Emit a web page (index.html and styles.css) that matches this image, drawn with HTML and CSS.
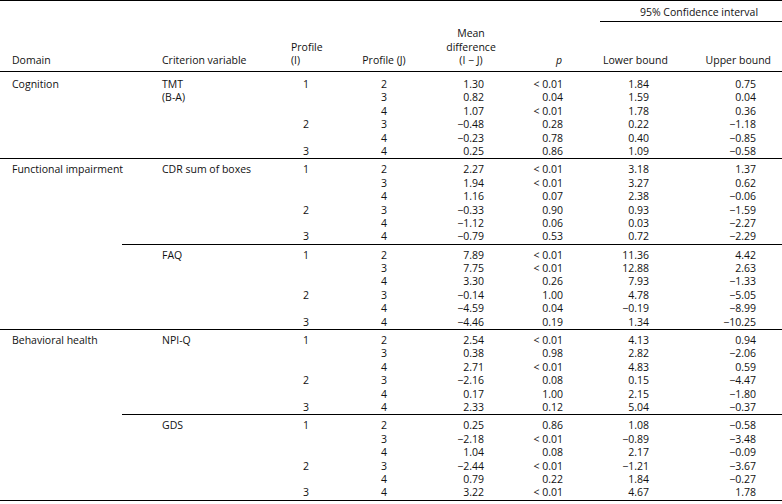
FILE: index.html
```html
<!DOCTYPE html>
<html lang="en">
<head>
<meta charset="utf-8">
<title>Pairwise comparisons</title>
<link rel="stylesheet" href="styles.css">
</head>
<body>
<table class="tbl">
  <colgroup>
    <col class="w-dom"><col class="w-crit"><col class="w-pi"><col class="w-pj"><col class="w-md"><col class="w-p"><col class="w-lo"><col class="w-up">
  </colgroup>
  <thead>
    <tr class="h-top">
      <td colspan="6"></td>
      <td colspan="2" class="ci"><div class="ci-label">95% Confidence interval</div></td>
    </tr>
    <tr class="h-main">
      <th class="dom">Domain</th>
      <th class="crit">Criterion variable</th>
      <th class="pi">Profile<br>(I)</th>
      <th class="pj">Profile (J)</th>
      <th class="md-h">Mean<br>difference<br>(I − J)</th>
      <th class="p-h"><i>p</i></th>
      <th class="lo-h">Lower bound</th>
      <th class="up-h">Upper bound</th>
    </tr>
  </thead>
  <tbody class="g-first">
    <tr class="first">
      <td class="dom" rowspan="6">Cognition</td>
      <td class="crit" rowspan="6">TMT<br>(B-A)</td>
      <td class="pi">1</td><td class="pj">2</td><td class="md">1.30</td><td class="p">&lt; 0.01</td><td class="lo">1.84</td><td class="up">0.75</td>
    </tr>
    <tr><td class="pi"></td><td class="pj">3</td><td class="md">0.82</td><td class="p">0.04</td><td class="lo">1.59</td><td class="up">0.04</td></tr>
    <tr><td class="pi"></td><td class="pj">4</td><td class="md">1.07</td><td class="p">&lt; 0.01</td><td class="lo">1.78</td><td class="up">0.36</td></tr>
    <tr><td class="pi">2</td><td class="pj">3</td><td class="md">−0.48</td><td class="p">0.28</td><td class="lo">0.22</td><td class="up">−1.18</td></tr>
    <tr><td class="pi"></td><td class="pj">4</td><td class="md">−0.23</td><td class="p">0.78</td><td class="lo">0.40</td><td class="up">−0.85</td></tr>
    <tr><td class="pi">3</td><td class="pj">4</td><td class="md">0.25</td><td class="p">0.86</td><td class="lo">1.09</td><td class="up">−0.58</td></tr>
  </tbody>
  <tbody>
    <tr class="first">
      <td class="dom" rowspan="12">Functional impairment</td>
      <td class="crit" rowspan="6">CDR sum of boxes</td>
      <td class="pi">1</td><td class="pj">2</td><td class="md">2.27</td><td class="p">&lt; 0.01</td><td class="lo">3.18</td><td class="up">1.37</td>
    </tr>
    <tr><td class="pi"></td><td class="pj">3</td><td class="md">1.94</td><td class="p">&lt; 0.01</td><td class="lo">3.27</td><td class="up">0.62</td></tr>
    <tr><td class="pi"></td><td class="pj">4</td><td class="md">1.16</td><td class="p">0.07</td><td class="lo">2.38</td><td class="up">−0.06</td></tr>
    <tr><td class="pi">2</td><td class="pj">3</td><td class="md">−0.33</td><td class="p">0.90</td><td class="lo">0.93</td><td class="up">−1.59</td></tr>
    <tr><td class="pi"></td><td class="pj">4</td><td class="md">−1.12</td><td class="p">0.06</td><td class="lo">0.03</td><td class="up">−2.27</td></tr>
    <tr><td class="pi">3</td><td class="pj">4</td><td class="md">−0.79</td><td class="p">0.53</td><td class="lo">0.72</td><td class="up">−2.29</td></tr>
    <tr class="first sub">
      <td class="crit" rowspan="6">FAQ</td>
      <td class="pi">1</td><td class="pj">2</td><td class="md">7.89</td><td class="p">&lt; 0.01</td><td class="lo">11.36</td><td class="up">4.42</td>
    </tr>
    <tr><td class="pi"></td><td class="pj">3</td><td class="md">7.75</td><td class="p">&lt; 0.01</td><td class="lo">12.88</td><td class="up">2.63</td></tr>
    <tr><td class="pi"></td><td class="pj">4</td><td class="md">3.30</td><td class="p">0.26</td><td class="lo">7.93</td><td class="up">−1.33</td></tr>
    <tr><td class="pi">2</td><td class="pj">3</td><td class="md">−0.14</td><td class="p">1.00</td><td class="lo">4.78</td><td class="up">−5.05</td></tr>
    <tr><td class="pi"></td><td class="pj">4</td><td class="md">−4.59</td><td class="p">0.04</td><td class="lo">−0.19</td><td class="up">−8.99</td></tr>
    <tr><td class="pi">3</td><td class="pj">4</td><td class="md">−4.46</td><td class="p">0.19</td><td class="lo">1.34</td><td class="up">−10.25</td></tr>
  </tbody>
  <tbody>
    <tr class="first">
      <td class="dom" rowspan="12">Behavioral health</td>
      <td class="crit" rowspan="6">NPI-Q</td>
      <td class="pi">1</td><td class="pj">2</td><td class="md">2.54</td><td class="p">&lt; 0.01</td><td class="lo">4.13</td><td class="up">0.94</td>
    </tr>
    <tr><td class="pi"></td><td class="pj">3</td><td class="md">0.38</td><td class="p">0.98</td><td class="lo">2.82</td><td class="up">−2.06</td></tr>
    <tr><td class="pi"></td><td class="pj">4</td><td class="md">2.71</td><td class="p">&lt; 0.01</td><td class="lo">4.83</td><td class="up">0.59</td></tr>
    <tr><td class="pi">2</td><td class="pj">3</td><td class="md">−2.16</td><td class="p">0.08</td><td class="lo">0.15</td><td class="up">−4.47</td></tr>
    <tr><td class="pi"></td><td class="pj">4</td><td class="md">0.17</td><td class="p">1.00</td><td class="lo">2.15</td><td class="up">−1.80</td></tr>
    <tr><td class="pi">3</td><td class="pj">4</td><td class="md">2.33</td><td class="p">0.12</td><td class="lo">5.04</td><td class="up">−0.37</td></tr>
    <tr class="first sub">
      <td class="crit" rowspan="6">GDS</td>
      <td class="pi">1</td><td class="pj">2</td><td class="md">0.25</td><td class="p">0.86</td><td class="lo">1.08</td><td class="up">−0.58</td>
    </tr>
    <tr><td class="pi"></td><td class="pj">3</td><td class="md">−2.18</td><td class="p">&lt; 0.01</td><td class="lo">−0.89</td><td class="up">−3.48</td></tr>
    <tr><td class="pi"></td><td class="pj">4</td><td class="md">1.04</td><td class="p">0.08</td><td class="lo">2.17</td><td class="up">−0.09</td></tr>
    <tr><td class="pi">2</td><td class="pj">3</td><td class="md">−2.44</td><td class="p">&lt; 0.01</td><td class="lo">−1.21</td><td class="up">−3.67</td></tr>
    <tr><td class="pi"></td><td class="pj">4</td><td class="md">0.79</td><td class="p">0.22</td><td class="lo">1.84</td><td class="up">−0.27</td></tr>
    <tr><td class="pi">3</td><td class="pj">4</td><td class="md">3.22</td><td class="p">&lt; 0.01</td><td class="lo">4.67</td><td class="up">1.78</td></tr>
  </tbody>
</table>
</body>
</html>
```
FILE: styles.css
```css
html, body {
  margin: 0;
  padding: 0;
  background: #fff;
}

body {
  font-family: "Open Sans", "Noto Sans", sans-serif;
  font-size: 10.5px;
  color: #111;
}

.tbl {
  width: 782px;
  border-collapse: collapse;
  table-layout: fixed;
  border-top: 1px solid #000;
  border-bottom: 1px solid #000;
}

.w-dom { width: 122px; }
.w-crit { width: 169px; }
.w-pi { width: 49px; }
.w-pj { width: 88px; }
.w-md { width: 86px; }
.w-p { width: 86px; }
.w-lo { width: 80px; }
.w-up { width: 102px; }

.tbl th,
.tbl td {
  padding: 0;
  line-height: 13.4px;
  font-weight: normal;
  white-space: nowrap;
  vertical-align: top;
}

/* header */
.h-top td { vertical-align: bottom; }
.ci { padding: 0 10px 0 3px; }
.ci-label {
  text-align: center;
  padding: 5px 0 2px 16px;
  border-bottom: 1px solid #000;
}

.h-main th {
  vertical-align: bottom;
  padding-top: 5px;
  padding-bottom: 3.8px;
  border-bottom: 1px solid #000;
}
.h-main .dom { text-align: left; padding-left: 12px; }
.h-main .crit { text-align: left; padding-left: 40px; }
.h-main .pi { text-align: left; }
.h-main .pj { text-align: center; }
.h-main .md-h { text-align: center; }
.h-main .p-h { text-align: right; padding-right: 38px; }
.h-main .lo-h { text-align: left; padding-left: 3px; }
.h-main .up-h { text-align: right; padding-right: 11px; }

/* body */
tbody + tbody tr.first td,
tr.sub td { border-top: 1px solid #000; }

tr.first td { padding-top: 3.9px; }
.g-first tr.first td { padding-top: 5.6px; }

td.dom { padding-left: 12px; text-align: left; }
td.crit { padding-left: 40px; text-align: left; }
td.pi { padding-left: 12px; text-align: left; }
td.pj { text-align: center; }
td.md { text-align: right; padding-right: 30px; }
td.p { text-align: right; padding-right: 37px; }
td.lo { text-align: right; padding-right: 31px; }
td.up { text-align: right; padding-right: 26px; }
```
